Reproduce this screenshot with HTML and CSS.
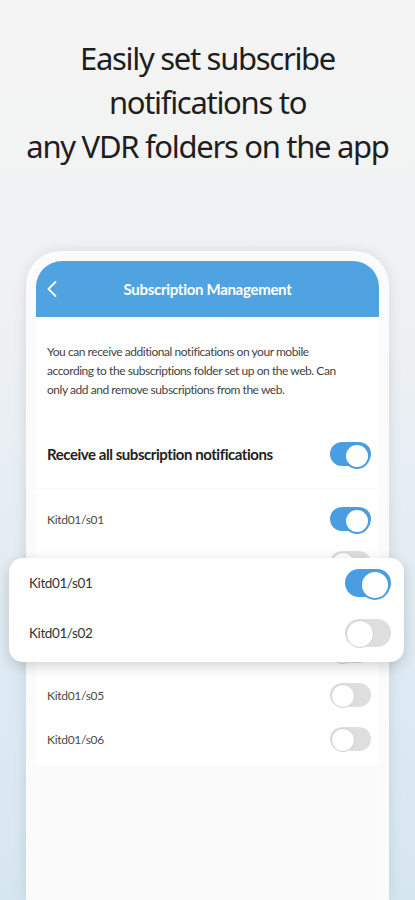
FILE: index.html
```html
<!DOCTYPE html>
<html lang="en">
<head>
    <meta charset="UTF-8" />
    <meta name="viewport" content="width=device-width, initial-scale=1" />
    <title>Subscription Management</title>
    <link rel="stylesheet" href="styles.css">
</head>
<body>
    <h1 class="headline">Easily set subscribe<br>notifications to<br>any VDR folders on the app</h1>

    <div class="phone">
        <div class="screen">
            <header class="appbar">
                <svg class="back" width="10" height="16" viewBox="0 0 10 16">
                    <polyline points="8.5,1 1.5,8 8.5,15" fill="none" stroke="#fff" stroke-width="1.8" stroke-linecap="round" stroke-linejoin="round" />
                </svg>
                <span class="appbar-title">Subscription Management</span>
            </header>

            <div class="content">
                <p class="desc">You can receive additional notifications on your mobile<br>according to the subscriptions folder set up on the web. Can<br>only add and remove subscriptions from the web.</p>

                <div class="row row-all">
                    <span>Receive all subscription notifications</span>
                    <span class="toggle on"></span>
                </div>

                <ul class="list">
                    <li class="row"><span>Kitd01/s01</span><span class="toggle on"></span></li>
                    <li class="row"><span>Kitd01/s02</span><span class="toggle"></span></li>
                    <li class="row"><span>Kitd01/s03</span><span class="toggle"></span></li>
                    <li class="row"><span>Kitd01/s04</span><span class="toggle"></span></li>
                    <li class="row"><span>Kitd01/s05</span><span class="toggle"></span></li>
                    <li class="row"><span>Kitd01/s06</span><span class="toggle"></span></li>
                </ul>
            </div>
        </div>

        <!-- zoomed-in card over the list -->
        <div class="popup">
            <div class="popup-row"><span>Kitd01/s01</span><span class="toggle big on"></span></div>
            <div class="popup-row"><span>Kitd01/s02</span><span class="toggle big"></span></div>
        </div>
    </div>
</body>
</html>
```

FILE: styles.css
```css
* {
    box-sizing: border-box;
}

body {
    margin: 0;
    height: 900px;
    overflow: hidden;
    background: linear-gradient(to bottom, #f4f4f4 0%, #f1f2f3 28%, #e0ebf3 70%, #d6e6f1 100%);
    font-family: Lato, "Noto Sans", sans-serif;
}

.headline {
    margin: 0;
    padding-top: 36px;
    text-align: center;
    font-family: "Noto Sans", sans-serif;
    font-weight: 400;
    font-size: 31px;
    line-height: 44px;
    letter-spacing: -1.3px;
    color: #1e1e1e;
}

.phone {
    position: relative;
    width: 363px;
    height: 650px;
    margin: 83px auto 0;
    padding: 10px 10px 0;
    background: #fbfbfb;
    border-radius: 34px 34px 0 0;
    box-shadow: 0 0 14px rgba(0, 0, 0, 0.1);
}

.screen {
    height: 100%;
    background: #fafafa;
    border-radius: 26px 26px 0 0;
    overflow: hidden;
}

.appbar {
    position: relative;
    height: 56px;
    display: flex;
    align-items: center;
    justify-content: center;
    background: #50a3e1;
}

.back {
    position: absolute;
    left: 11px;
    top: 20px;
}

.appbar-title {
    color: #fff;
    font-weight: 700;
    font-size: 15px;
    letter-spacing: -0.3px;
}

.content {
    background: #fff;
    padding: 25px 8px 5px 11px;
}

.desc {
    margin: 0 0 33px;
    font-size: 12px;
    line-height: 19px;
    letter-spacing: -0.45px;
    color: #444;
}

.row {
    display: flex;
    align-items: center;
    justify-content: space-between;
    height: 44px;
    font-size: 12px;
    color: #4a4a4a;
    letter-spacing: -0.3px;
}

.row-all {
    margin-bottom: 12px;
    font-size: 15px;
    font-weight: 700;
    color: #222;
    letter-spacing: -0.45px;
}

.list {
    list-style: none;
    margin: 0 -8px 0 -11px;
    padding: 8px 8px 0 11px;
    border-top: 1px solid #f7f7f7;
}

.toggle {
    position: relative;
    width: 41px;
    height: 24px;
    border-radius: 12px;
    background: #dedede;
    flex-shrink: 0;
}

.toggle::after {
    content: "";
    position: absolute;
    top: 1px;
    left: 1px;
    width: 22px;
    height: 22px;
    border-radius: 50%;
    background: #fff;
    border: 1px solid #d0d0d0;
}

.toggle.on {
    background: #4a9de0;
}

.toggle.on::after {
    left: auto;
    right: 1px;
    border: 2px solid #4a9de0;
}

.toggle.big {
    width: 46px;
    height: 28px;
    border-radius: 14px;
}

.toggle.big::after {
    width: 26px;
    height: 26px;
}

.popup {
    position: absolute;
    left: -17px;
    top: 307px;
    width: 395px;
    padding: 0 13px 4px 20px;
    background: #fff;
    border-radius: 14px;
    box-shadow: 0 4px 14px rgba(0, 0, 0, 0.18);
}

.popup-row {
    display: flex;
    align-items: center;
    justify-content: space-between;
    height: 50px;
    font-size: 13.5px;
    color: #333;
    letter-spacing: -0.4px;
}
```
